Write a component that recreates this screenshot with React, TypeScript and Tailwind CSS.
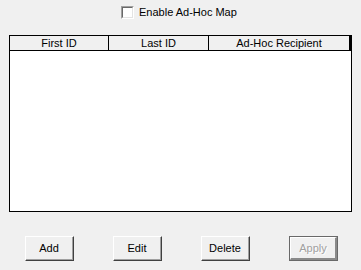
import React from "react";

const font = { fontFamily: '"Liberation Sans", Arial, sans-serif' };

function Btn({ label, disabled }: { label: string; disabled?: boolean }) {
  if (disabled) {
    return (
      <div className="w-[49px] h-[25px] border border-[#696969] bg-[#f0f0f0]">
        <div className="w-full h-full border-t border-l border-[#ffffff] border-b-2 border-r-2 border-b-[#8a8a8a] border-r-[#8a8a8a] flex items-center justify-center text-[11px] text-[#a0a0a0] [text-shadow:1px_1px_0_#ffffff]">
          {label}
        </div>
      </div>
    );
  }
  return (
    <div className="w-[49px] h-[25px] border-t border-l border-t-[#ffffff] border-l-[#ffffff] border-b border-r border-b-[#404040] border-r-[#404040] bg-[#f0f0f0]">
      <div className="w-full h-full border-b border-r border-b-[#a0a0a0] border-r-[#a0a0a0] flex items-center justify-center text-[11px] text-black">
        {label}
      </div>
    </div>
  );
}

export default function App() {
  return (
    <div className="w-[361px] h-[270px] bg-[#f0f0f0] flex flex-col overflow-hidden" style={font}>
      {/* Enable checkbox */}
      <div className="flex items-center pl-[121px] pt-[6px] h-[19px]">
        <div className="w-[13px] h-[13px] border-t border-l border-t-[#a0a0a0] border-l-[#a0a0a0] border-b border-r border-b-[#ffffff] border-r-[#ffffff]">
          <div className="w-full h-full border-t border-l border-t-[#696969] border-l-[#696969] border-b border-r border-b-[#e3e3e3] border-r-[#e3e3e3] bg-white" />
        </div>
        <span className="ml-[5px] text-[11px] text-black leading-none">Enable Ad-Hoc Map</span>
      </div>

      {/* List */}
      <div className="mt-[16px] ml-[9px] w-[343px] h-[177px] border border-black bg-white flex flex-col">
        <div className="flex h-[15px] bg-[#f0f0f0] border-b border-black text-[11px] text-black leading-none">
          <div className="w-[99px] border-r border-black flex items-center justify-center">First ID</div>
          <div className="w-[100px] border-r border-black flex items-center justify-center">Last ID</div>
          <div className="flex-1 border-r-2 border-black flex items-center justify-center">Ad-Hoc Recipient</div>
        </div>
        <div className="flex-1" />
      </div>

      {/* Buttons */}
      <div className="flex mt-[24px] pl-[25px] gap-[39px]">
        <Btn label="Add" />
        <Btn label="Edit" />
        <Btn label="Delete" />
        <Btn label="Apply" disabled />
      </div>
    </div>
  );
}
